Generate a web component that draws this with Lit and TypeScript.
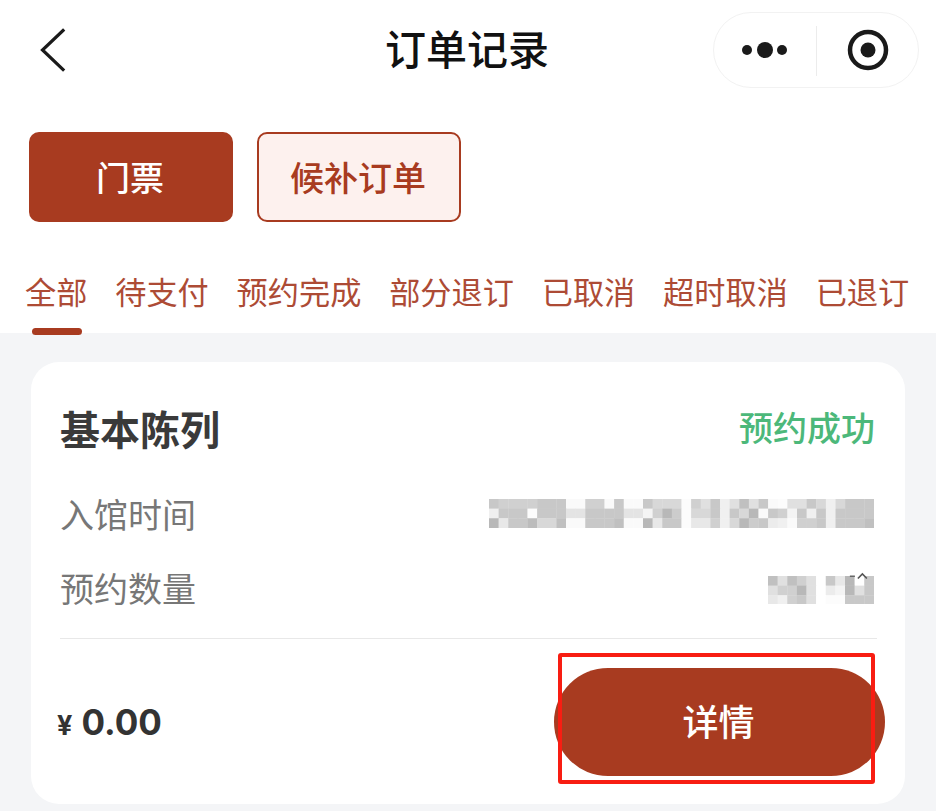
import { LitElement, html, css, svg } from "lit";
import { customElement } from "lit/decorators.js";

const CELL = 9.625;

const DATE_MOSAIC = [
  "c8 d0 d0 d0 d0 c8 c8 c8 fa fa d0 d0 fa c8 fa fa c8 d8 d8 d8 fc d0 e0 c8 f0 e0 c0 e0 c8 fa fc e0 e0 c8 d8 f0 d8 c8 c8 c8",
  "f0 c8 c8 c8 fc c8 c8 c8 e4 e4 c8 c8 c8 c8 e4 e4 f4 d0 b8 cc fc d8 d8 c8 f0 c8 d8 b8 fa c8 d0 f4 c8 f0 c8 f0 c8 c8 c8 c8",
  "b8 e8 c8 c8 bc d8 d8 c0 fa fa c8 c8 c8 c0 fa fa b8 e8 c8 c8 fc e8 e8 d0 f0 d8 b8 cc c8 ec f0 fa d0 d0 c8 f0 c8 c8 c8 c0",
];

const COUNT_MOSAIC = [
  "c0 e0 c0 d0 e0 ff c8 e8 b8 ff c8",
  "e0 d0 d0 b8 e0 ff ec f4 b8 e0 c8",
  "e8 f0 d0 c8 e0 ff fc fc c8 c8 c8",
];

function mosaic(rows: string[], caret = false) {
  const grid = rows.map((r) => r.split(" "));
  const w = grid[0].length * CELL;
  const h = 3 * CELL;
  const top = caret ? 5 : 0;
  return html`<svg class="mosaic" width=${w} height=${h + top} viewBox="0 ${-top} ${w} ${h + top}">
    ${grid.map((row, y) =>
      row.map(
        (c, x) =>
          svg`<rect x=${x * CELL} y=${y * CELL} width=${CELL + 0.3} height=${CELL + 0.3} fill="#${c}${c}${c}"></rect>`
      )
    )}
    ${caret
      ? svg`<path d="M${w - 16} 2.5 L${w - 11.5} -2 L${w - 7} 2.5" fill="none" stroke="#555" stroke-width="1.6"></path>
            <rect x=${w - 24} y="-0.5" width="5" height="1.5" fill="#666"></rect>`
      : null}
  </svg>`;
}

@customElement("app-root")
export class AppRoot extends LitElement {
  static styles = css`
    :host {
      display: block;
      width: 936px;
      height: 811px;
      overflow: hidden;
      background: #f4f5f7;
      font-family: "Noto Sans CJK SC", "Liberation Sans", sans-serif;
    }
    .top {
      background: #fff;
    }
    .nav {
      height: 100px;
      display: grid;
      grid-template-columns: 1fr auto 1fr;
      align-items: center;
    }
    .back {
      display: block;
      margin-left: 38px;
    }
    .title {
      font-size: 41px;
      font-weight: 500;
      color: #111;
      line-height: 1;
      padding: 0 2px 5px 0;
    }
    .capsule {
      justify-self: end;
      margin-right: 17px;
      width: 206px;
      height: 76px;
      box-sizing: border-box;
      border: 1px solid #f2f2f2;
      border-radius: 38px;
      display: block;
      background: #fff;
    }
    .capsule svg {
      display: block;
    }
    .kinds {
      display: flex;
      gap: 24px;
      padding: 32px 0 0 29px;
    }
    .kind {
      width: 204px;
      height: 90px;
      box-sizing: border-box;
      border-radius: 10px;
      display: flex;
      align-items: center;
      justify-content: center;
      font-size: 34px;
      font-weight: 500;
      padding: 0 2px 2px 0;
    }
    .kind.on {
      background: #a83b20;
      color: #fff;
    }
    .kind.off {
      background: #fdf1ee;
      color: #a83b20;
      border: 2px solid #a83b20;
    }
    .tabs {
      display: flex;
      gap: 27.8px;
      padding: 46px 0 19px 25px;
    }
    .tab {
      position: relative;
      font-size: 31.2px;
      line-height: 46px;
      color: #ad4b35;
      white-space: nowrap;
    }
    .tab.active::after {
      content: "";
      position: absolute;
      left: 7px;
      bottom: -21px;
      width: 50px;
      height: 7px;
      border-radius: 4px;
      background: #a83b20;
    }
    .card {
      margin: 29px 31px 0;
      height: 442px;
      box-sizing: border-box;
      padding: 44px 28px 0 29px;
      background: #fff;
      border-radius: 28px;
    }
    .head {
      display: flex;
      justify-content: space-between;
      align-items: center;
      height: 48px;
      padding-right: 2px;
      margin-bottom: 25px;
    }
    .name {
      font-size: 40px;
      font-weight: 700;
      line-height: 48px;
      color: #3a3a3a;
      padding-bottom: 5px;
    }
    .status {
      font-size: 34px;
      font-weight: 500;
      line-height: 48px;
      color: #4cb87a;
      padding-bottom: 7px;
    }
    .row {
      display: flex;
      justify-content: space-between;
      align-items: center;
      box-sizing: border-box;
      height: 74px;
      font-size: 34px;
      color: #777;
      padding: 0 3px 5px 0;
    }
    .mosaic {
      display: block;
    }
    .rule {
      margin-top: 11px;
      border-top: 1px solid #e8e8e8;
    }
    .foot {
      margin: 29px -8px 0 -3px;
      display: flex;
      justify-content: space-between;
      align-items: center;
    }
    .price {
      display: flex;
      align-items: baseline;
      gap: 9px;
      font-family: Inter, "Liberation Sans", sans-serif;
      font-weight: 700;
      color: #333;
    }
    .cur {
      font-size: 27px;
    }
    .amount {
      font-size: 35px;
    }
    .detail {
      position: relative;
      box-sizing: border-box;
      width: 331px;
      height: 108px;
      padding: 0 2px 4px 0;
      border-radius: 54px;
      background: #a83b20;
      color: #fff;
      font-size: 36px;
      font-weight: 500;
      display: flex;
      align-items: center;
      justify-content: center;
    }
    .mark {
      position: absolute;
      left: 4px;
      top: -15px;
      width: 317px;
      height: 131px;
      box-sizing: border-box;
      border: 4px solid #f81d12;
      border-radius: 3px;
    }
  `;

  render() {
    const tabs = ["全部", "待支付", "预约完成", "部分退订", "已取消", "超时取消", "已退订"];
    return html`
      <div class="top">
        <div class="nav">
          <svg class="back" width="30" height="46" viewBox="0 0 30 46" fill="none">
            <path d="M25 3.5 L4.5 23 L25 42.5" stroke="#1a1a1a" stroke-width="3.2" stroke-linecap="square"></path>
          </svg>
          <div class="title">订单记录</div>
          <div class="capsule">
            <svg width="204" height="74" viewBox="0 0 204 74">
              <circle cx="33" cy="37" r="5" fill="#1a1a1a"></circle>
              <circle cx="51" cy="37" r="8" fill="#1a1a1a"></circle>
              <circle cx="68" cy="37" r="5" fill="#1a1a1a"></circle>
              <rect x="102" y="13" width="1" height="50" fill="#ececec"></rect>
              <circle cx="154" cy="37" r="18" fill="none" stroke="#1a1a1a" stroke-width="4.5"></circle>
              <circle cx="154" cy="37" r="7.5" fill="#1a1a1a"></circle>
            </svg>
          </div>
        </div>
        <div class="kinds">
          <div class="kind on">门票</div>
          <div class="kind off">候补订单</div>
        </div>
        <div class="tabs">
          ${tabs.map((t, i) => html`<div class="tab ${i === 0 ? "active" : ""}">${t}</div>`)}
        </div>
      </div>
      <div class="card">
        <div class="head">
          <div class="name">基本陈列</div>
          <div class="status">预约成功</div>
        </div>
        <div class="row"><span>入馆时间</span>${mosaic(DATE_MOSAIC)}</div>
        <div class="row"><span>预约数量</span>${mosaic(COUNT_MOSAIC, true)}</div>
        <div class="rule"></div>
        <div class="foot">
          <div class="price"><span class="cur">¥</span><span class="amount">0.00</span></div>
          <div class="detail">详情<div class="mark"></div></div>
        </div>
      </div>
    `;
  }
}
